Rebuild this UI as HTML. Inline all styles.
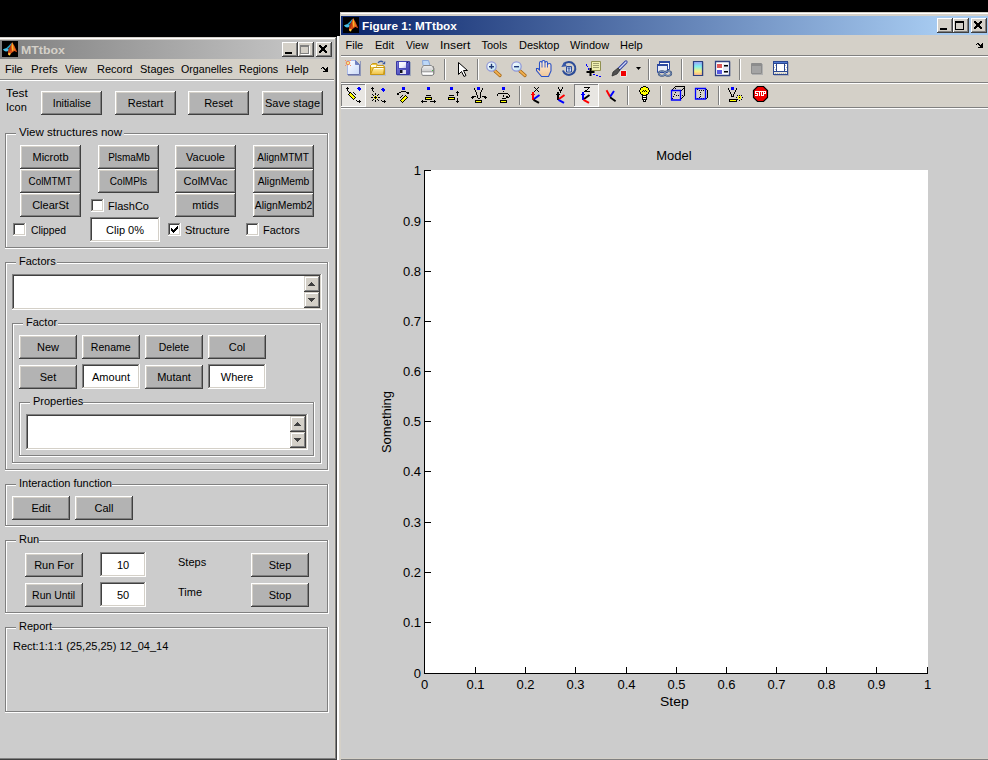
<!DOCTYPE html><html><head><meta charset="utf-8"><style>
html,body{margin:0;padding:0;width:988px;height:760px;overflow:hidden;background:#000}
body>div,body>svg{position:absolute}
.t{font-family:"Liberation Sans",sans-serif;white-space:pre;color:#000}
</style></head><body>
<div style="left:0px;top:0px;width:988px;height:760px;background:#000;"></div>
<div style="left:0px;top:37px;width:337px;height:723px;background:#404040;"></div>
<div style="left:0px;top:37px;width:336px;height:722px;background:#D4D0C8;"></div>
<div style="left:0px;top:38px;width:336px;height:721px;background:#808080;"></div>
<div style="left:0px;top:38px;width:335px;height:720px;background:#FFFFFF;"></div>
<div style="left:0px;top:39px;width:335px;height:719px;background:#D4D0C8;"></div>
<div style="left:0px;top:40px;width:334px;height:19px;background:linear-gradient(to right,#808080,#C0C0C0 84%);"></div>
<svg style="left:2px;top:41px" width="16" height="16" viewBox="0 0 16 16"><rect width="16" height="16" fill="#000"/><path d="M4.5 6.8L7 4.5 9.5 1.8 9.9 3 8 6 6 7.8Z" fill="#2A9CC0"/><path d="M0.8 8.5L3 7.5 5 7 6.6 8 6.6 10 4 10.6 2.5 9.9Z" fill="#48C0E8"/><path d="M10.1 0.9L12.5 5 15.2 11.3 12.3 10 9.5 12 7.5 14.3 6 13.5 6 10.5 7 8 9 4Z" fill="#D85018"/><path d="M10.1 1.5L11.4 5 11.6 9 10.3 10.6 9.7 6Z" fill="#F8B828"/><path d="M11.6 5L13 8.5 12.3 10 11.6 9Z" fill="#F07820"/><path d="M6.3 12L8.6 12.3 8 14.4 6.5 14Z" fill="#FFD838"/><path d="M6 10.5L7 8 9 4 8.6 9 7 12Z" fill="#A83010"/></svg>
<div class="t" style="left:21px;top:40px;height:20px;line-height:20px;font-size:11px;color:#D4D0C8;font-weight:bold;transform:scaleX(1.12);transform-origin:0 0;">MTtbox</div>
<div style="left:282px;top:42px;width:16px;height:15px;background:#404040;"></div>
<div style="left:282px;top:42px;width:15px;height:14px;background:#FFFFFF;"></div>
<div style="left:283px;top:43px;width:14px;height:13px;background:#808080;"></div>
<div style="left:283px;top:43px;width:13px;height:12px;background:#D4D0C8;"></div>
<div style="left:284px;top:44px;width:12px;height:11px;background:#D4D0C8;"></div>
<div style="left:285px;top:52px;width:7px;height:2px;background:#000;"></div>
<div style="left:298px;top:42px;width:16px;height:15px;background:#404040;"></div>
<div style="left:298px;top:42px;width:15px;height:14px;background:#FFFFFF;"></div>
<div style="left:299px;top:43px;width:14px;height:13px;background:#808080;"></div>
<div style="left:299px;top:43px;width:13px;height:12px;background:#D4D0C8;"></div>
<div style="left:300px;top:44px;width:12px;height:11px;background:#D4D0C8;"></div>
<div style="left:301px;top:46px;width:9px;height:9px;background:#FFFFFF;"></div>
<div style="left:300px;top:45px;width:9px;height:9px;background:#808080;"></div>
<div style="left:301px;top:47px;width:7px;height:6px;background:#D4D0C8;"></div>
<div style="left:316px;top:42px;width:16px;height:15px;background:#404040;"></div>
<div style="left:316px;top:42px;width:15px;height:14px;background:#FFFFFF;"></div>
<div style="left:317px;top:43px;width:14px;height:13px;background:#808080;"></div>
<div style="left:317px;top:43px;width:13px;height:12px;background:#D4D0C8;"></div>
<div style="left:318px;top:44px;width:12px;height:11px;background:#D4D0C8;"></div>
<svg style="left:316px;top:42px" width="16" height="15" viewBox="0 0 16 15"><path d="M3 3h1v1h-1zM4 3h1v1h-1zM9 3h1v1h-1zM10 3h1v1h-1zM3 4h1v1h-1zM4 4h1v1h-1zM5 4h1v1h-1zM8 4h1v1h-1zM9 4h1v1h-1zM10 4h1v1h-1zM4 5h1v1h-1zM5 5h1v1h-1zM6 5h1v1h-1zM7 5h1v1h-1zM8 5h1v1h-1zM9 5h1v1h-1zM5 6h1v1h-1zM6 6h1v1h-1zM7 6h1v1h-1zM8 6h1v1h-1zM5 7h1v1h-1zM6 7h1v1h-1zM7 7h1v1h-1zM8 7h1v1h-1zM4 8h1v1h-1zM5 8h1v1h-1zM6 8h1v1h-1zM7 8h1v1h-1zM8 8h1v1h-1zM9 8h1v1h-1zM3 9h1v1h-1zM4 9h1v1h-1zM5 9h1v1h-1zM8 9h1v1h-1zM9 9h1v1h-1zM10 9h1v1h-1zM3 10h1v1h-1zM4 10h1v1h-1zM9 10h1v1h-1zM10 10h1v1h-1z" fill="#000" shape-rendering="crispEdges"/></svg>
<div style="left:0px;top:59px;width:334px;height:20px;background:#D4D0C8;"></div>
<div class="t" style="left:5px;top:59px;height:20px;line-height:20px;font-size:11px;color:#000;">File</div>
<div class="t" style="left:31px;top:59px;height:20px;line-height:20px;font-size:11px;color:#000;transform:scaleX(1.04);transform-origin:0 0;">Prefs</div>
<div class="t" style="left:65px;top:59px;height:20px;line-height:20px;font-size:11px;color:#000;transform:scaleX(0.93);transform-origin:0 0;">View</div>
<div class="t" style="left:97px;top:59px;height:20px;line-height:20px;font-size:11px;color:#000;">Record</div>
<div class="t" style="left:140px;top:59px;height:20px;line-height:20px;font-size:11px;color:#000;">Stages</div>
<div class="t" style="left:181px;top:59px;height:20px;line-height:20px;font-size:11px;color:#000;transform:scaleX(0.97);transform-origin:0 0;">Organelles</div>
<div class="t" style="left:239px;top:59px;height:20px;line-height:20px;font-size:11px;color:#000;transform:scaleX(0.97);transform-origin:0 0;">Regions</div>
<div class="t" style="left:286px;top:59px;height:20px;line-height:20px;font-size:11px;color:#000;">Help</div>
<div style="left:0px;top:79px;width:334px;height:1px;background:#808080;"></div>
<div style="left:0px;top:80px;width:334px;height:1px;background:#FFFFFF;"></div>
<div style="left:0px;top:81px;width:334px;height:677px;background:#CCCCCC;"></div>
<div class="t" style="left:6px;top:83px;height:20px;line-height:20px;font-size:11px;color:#000;transform:scaleX(1.08);transform-origin:0 0;">Test</div>
<div class="t" style="left:6px;top:97px;height:20px;line-height:20px;font-size:11px;color:#000;">Icon</div>
<div style="left:41px;top:91px;width:61px;height:24px;background:#404040;"></div>
<div style="left:41px;top:91px;width:60px;height:23px;background:#FFFFFF;"></div>
<div style="left:42px;top:92px;width:59px;height:22px;background:#808080;"></div>
<div style="left:42px;top:92px;width:58px;height:21px;background:#D4D0C8;"></div>
<div style="left:43px;top:93px;width:57px;height:20px;background:#B3B3B3;"></div>
<div class="t" style="left:-78.5px;top:93px;width:300px;height:20px;line-height:20px;font-size:11px;color:#000;text-align:center;"><span style="display:inline-block;transform:scaleX(0.963)">Initialise</span></div>
<div style="left:115px;top:91px;width:61px;height:24px;background:#404040;"></div>
<div style="left:115px;top:91px;width:60px;height:23px;background:#FFFFFF;"></div>
<div style="left:116px;top:92px;width:59px;height:22px;background:#808080;"></div>
<div style="left:116px;top:92px;width:58px;height:21px;background:#D4D0C8;"></div>
<div style="left:117px;top:93px;width:57px;height:20px;background:#B3B3B3;"></div>
<div class="t" style="left:-4.5px;top:93px;width:300px;height:20px;line-height:20px;font-size:11px;color:#000;text-align:center;">Restart</div>
<div style="left:188px;top:91px;width:61px;height:24px;background:#404040;"></div>
<div style="left:188px;top:91px;width:60px;height:23px;background:#FFFFFF;"></div>
<div style="left:189px;top:92px;width:59px;height:22px;background:#808080;"></div>
<div style="left:189px;top:92px;width:58px;height:21px;background:#D4D0C8;"></div>
<div style="left:190px;top:93px;width:57px;height:20px;background:#B3B3B3;"></div>
<div class="t" style="left:68.5px;top:93px;width:300px;height:20px;line-height:20px;font-size:11px;color:#000;text-align:center;">Reset</div>
<div style="left:262px;top:91px;width:61px;height:24px;background:#404040;"></div>
<div style="left:262px;top:91px;width:60px;height:23px;background:#FFFFFF;"></div>
<div style="left:263px;top:92px;width:59px;height:22px;background:#808080;"></div>
<div style="left:263px;top:92px;width:58px;height:21px;background:#D4D0C8;"></div>
<div style="left:264px;top:93px;width:57px;height:20px;background:#B3B3B3;"></div>
<div class="t" style="left:142.5px;top:93px;width:300px;height:20px;line-height:20px;font-size:11px;color:#000;text-align:center;">Save stage</div>
<div style="left:5px;top:133px;width:323px;height:1px;background:#808080;"></div>
<div style="left:5px;top:133px;width:1px;height:115px;background:#808080;"></div>
<div style="left:6px;top:134px;width:321px;height:1px;background:#FFFFFF;"></div>
<div style="left:6px;top:134px;width:1px;height:113px;background:#FFFFFF;"></div>
<div style="left:327px;top:133px;width:1px;height:115px;background:#808080;"></div>
<div style="left:5px;top:247px;width:323px;height:1px;background:#808080;"></div>
<div style="left:328px;top:133px;width:1px;height:116px;background:#FFFFFF;"></div>
<div style="left:5px;top:248px;width:324px;height:1px;background:#FFFFFF;"></div>
<div style="left:16px;top:126px;width:108px;height:9px;background:#CCCCCC;"></div>
<div class="t" style="left:19px;top:122px;height:20px;line-height:20px;font-size:11px;color:#000;transform:scaleX(1.05);transform-origin:0 0;">View structures now</div>
<div style="left:20px;top:145px;width:61px;height:24px;background:#404040;"></div>
<div style="left:20px;top:145px;width:60px;height:23px;background:#FFFFFF;"></div>
<div style="left:21px;top:146px;width:59px;height:22px;background:#808080;"></div>
<div style="left:21px;top:146px;width:58px;height:21px;background:#D4D0C8;"></div>
<div style="left:22px;top:147px;width:57px;height:20px;background:#B3B3B3;"></div>
<div class="t" style="left:-99.5px;top:147px;width:300px;height:20px;line-height:20px;font-size:11px;color:#000;text-align:center;">Microtb</div>
<div style="left:98px;top:145px;width:61px;height:24px;background:#404040;"></div>
<div style="left:98px;top:145px;width:60px;height:23px;background:#FFFFFF;"></div>
<div style="left:99px;top:146px;width:59px;height:22px;background:#808080;"></div>
<div style="left:99px;top:146px;width:58px;height:21px;background:#D4D0C8;"></div>
<div style="left:100px;top:147px;width:57px;height:20px;background:#B3B3B3;"></div>
<div class="t" style="left:-21.5px;top:147px;width:300px;height:20px;line-height:20px;font-size:11px;color:#000;text-align:center;"><span style="display:inline-block;transform:scaleX(0.907)">PlsmaMb</span></div>
<div style="left:175px;top:145px;width:61px;height:24px;background:#404040;"></div>
<div style="left:175px;top:145px;width:60px;height:23px;background:#FFFFFF;"></div>
<div style="left:176px;top:146px;width:59px;height:22px;background:#808080;"></div>
<div style="left:176px;top:146px;width:58px;height:21px;background:#D4D0C8;"></div>
<div style="left:177px;top:147px;width:57px;height:20px;background:#B3B3B3;"></div>
<div class="t" style="left:55.5px;top:147px;width:300px;height:20px;line-height:20px;font-size:11px;color:#000;text-align:center;">Vacuole</div>
<div style="left:253px;top:145px;width:61px;height:24px;background:#404040;"></div>
<div style="left:253px;top:145px;width:60px;height:23px;background:#FFFFFF;"></div>
<div style="left:254px;top:146px;width:59px;height:22px;background:#808080;"></div>
<div style="left:254px;top:146px;width:58px;height:21px;background:#D4D0C8;"></div>
<div style="left:255px;top:147px;width:57px;height:20px;background:#B3B3B3;"></div>
<div class="t" style="left:133.5px;top:147px;width:300px;height:20px;line-height:20px;font-size:11px;color:#000;text-align:center;"><span style="display:inline-block;transform:scaleX(0.92)">AlignMTMT</span></div>
<div style="left:20px;top:169px;width:61px;height:24px;background:#404040;"></div>
<div style="left:20px;top:169px;width:60px;height:23px;background:#FFFFFF;"></div>
<div style="left:21px;top:170px;width:59px;height:22px;background:#808080;"></div>
<div style="left:21px;top:170px;width:58px;height:21px;background:#D4D0C8;"></div>
<div style="left:22px;top:171px;width:57px;height:20px;background:#B3B3B3;"></div>
<div class="t" style="left:-99.5px;top:171px;width:300px;height:20px;line-height:20px;font-size:11px;color:#000;text-align:center;"><span style="display:inline-block;transform:scaleX(0.894)">ColMTMT</span></div>
<div style="left:98px;top:169px;width:61px;height:24px;background:#404040;"></div>
<div style="left:98px;top:169px;width:60px;height:23px;background:#FFFFFF;"></div>
<div style="left:99px;top:170px;width:59px;height:22px;background:#808080;"></div>
<div style="left:99px;top:170px;width:58px;height:21px;background:#D4D0C8;"></div>
<div style="left:100px;top:171px;width:57px;height:20px;background:#B3B3B3;"></div>
<div class="t" style="left:-21.5px;top:171px;width:300px;height:20px;line-height:20px;font-size:11px;color:#000;text-align:center;"><span style="display:inline-block;transform:scaleX(0.91)">ColMPls</span></div>
<div style="left:175px;top:169px;width:61px;height:24px;background:#404040;"></div>
<div style="left:175px;top:169px;width:60px;height:23px;background:#FFFFFF;"></div>
<div style="left:176px;top:170px;width:59px;height:22px;background:#808080;"></div>
<div style="left:176px;top:170px;width:58px;height:21px;background:#D4D0C8;"></div>
<div style="left:177px;top:171px;width:57px;height:20px;background:#B3B3B3;"></div>
<div class="t" style="left:55.5px;top:171px;width:300px;height:20px;line-height:20px;font-size:11px;color:#000;text-align:center;">ColMVac</div>
<div style="left:253px;top:169px;width:61px;height:24px;background:#404040;"></div>
<div style="left:253px;top:169px;width:60px;height:23px;background:#FFFFFF;"></div>
<div style="left:254px;top:170px;width:59px;height:22px;background:#808080;"></div>
<div style="left:254px;top:170px;width:58px;height:21px;background:#D4D0C8;"></div>
<div style="left:255px;top:171px;width:57px;height:20px;background:#B3B3B3;"></div>
<div class="t" style="left:133.5px;top:171px;width:300px;height:20px;line-height:20px;font-size:11px;color:#000;text-align:center;"><span style="display:inline-block;transform:scaleX(0.94)">AlignMemb</span></div>
<div style="left:20px;top:193px;width:61px;height:24px;background:#404040;"></div>
<div style="left:20px;top:193px;width:60px;height:23px;background:#FFFFFF;"></div>
<div style="left:21px;top:194px;width:59px;height:22px;background:#808080;"></div>
<div style="left:21px;top:194px;width:58px;height:21px;background:#D4D0C8;"></div>
<div style="left:22px;top:195px;width:57px;height:20px;background:#B3B3B3;"></div>
<div class="t" style="left:-99.5px;top:195px;width:300px;height:20px;line-height:20px;font-size:11px;color:#000;text-align:center;">ClearSt</div>
<div style="left:175px;top:193px;width:61px;height:24px;background:#404040;"></div>
<div style="left:175px;top:193px;width:60px;height:23px;background:#FFFFFF;"></div>
<div style="left:176px;top:194px;width:59px;height:22px;background:#808080;"></div>
<div style="left:176px;top:194px;width:58px;height:21px;background:#D4D0C8;"></div>
<div style="left:177px;top:195px;width:57px;height:20px;background:#B3B3B3;"></div>
<div class="t" style="left:55.5px;top:195px;width:300px;height:20px;line-height:20px;font-size:11px;color:#000;text-align:center;">mtids</div>
<div style="left:253px;top:193px;width:61px;height:24px;background:#404040;"></div>
<div style="left:253px;top:193px;width:60px;height:23px;background:#FFFFFF;"></div>
<div style="left:254px;top:194px;width:59px;height:22px;background:#808080;"></div>
<div style="left:254px;top:194px;width:58px;height:21px;background:#D4D0C8;"></div>
<div style="left:255px;top:195px;width:57px;height:20px;background:#B3B3B3;"></div>
<div class="t" style="left:133.5px;top:195px;width:300px;height:20px;line-height:20px;font-size:11px;color:#000;text-align:center;"><span style="display:inline-block;transform:scaleX(0.94)">AlignMemb2</span></div>
<div style="left:91px;top:199px;width:13px;height:13px;background:#FFFFFF;"></div>
<div style="left:91px;top:199px;width:12px;height:12px;background:#808080;"></div>
<div style="left:92px;top:200px;width:11px;height:11px;background:#D4D0C8;"></div>
<div style="left:92px;top:200px;width:10px;height:10px;background:#404040;"></div>
<div style="left:93px;top:201px;width:9px;height:9px;background:#FFFFFF;"></div>
<div class="t" style="left:108px;top:196px;height:20px;line-height:20px;font-size:11px;color:#000;">FlashCo</div>
<div style="left:13px;top:223px;width:13px;height:13px;background:#FFFFFF;"></div>
<div style="left:13px;top:223px;width:12px;height:12px;background:#808080;"></div>
<div style="left:14px;top:224px;width:11px;height:11px;background:#D4D0C8;"></div>
<div style="left:14px;top:224px;width:10px;height:10px;background:#404040;"></div>
<div style="left:15px;top:225px;width:9px;height:9px;background:#FFFFFF;"></div>
<div class="t" style="left:31px;top:220px;height:20px;line-height:20px;font-size:11px;color:#000;transform:scaleX(0.94);transform-origin:0 0;">Clipped</div>
<div style="left:90px;top:217px;width:70px;height:25px;background:#FFFFFF;"></div>
<div style="left:90px;top:217px;width:69px;height:24px;background:#808080;"></div>
<div style="left:91px;top:218px;width:68px;height:23px;background:#D4D0C8;"></div>
<div style="left:91px;top:218px;width:67px;height:22px;background:#404040;"></div>
<div style="left:92px;top:219px;width:66px;height:21px;background:#FFFFFF;"></div>
<div class="t" style="left:-25.0px;top:220px;width:300px;height:20px;line-height:20px;font-size:11px;color:#000;text-align:center;">Clip 0%</div>
<div style="left:168px;top:223px;width:13px;height:13px;background:#FFFFFF;"></div>
<div style="left:168px;top:223px;width:12px;height:12px;background:#808080;"></div>
<div style="left:169px;top:224px;width:11px;height:11px;background:#D4D0C8;"></div>
<div style="left:169px;top:224px;width:10px;height:10px;background:#404040;"></div>
<div style="left:170px;top:225px;width:9px;height:9px;background:#FFFFFF;"></div>
<svg style="left:168px;top:223px" width="13" height="13" shape-rendering="crispEdges"><path d="M3 5h1v3h-1zM4 6h1v3h-1zM5 7h1v3h-1zM6 6h1v3h-1zM7 5h1v3h-1zM8 4h1v3h-1zM9 3h1v3h-1z" fill="#000"/></svg>
<div class="t" style="left:185px;top:220px;height:20px;line-height:20px;font-size:11px;color:#000;">Structure</div>
<div style="left:246px;top:223px;width:13px;height:13px;background:#FFFFFF;"></div>
<div style="left:246px;top:223px;width:12px;height:12px;background:#808080;"></div>
<div style="left:247px;top:224px;width:11px;height:11px;background:#D4D0C8;"></div>
<div style="left:247px;top:224px;width:10px;height:10px;background:#404040;"></div>
<div style="left:248px;top:225px;width:9px;height:9px;background:#FFFFFF;"></div>
<div class="t" style="left:263px;top:220px;height:20px;line-height:20px;font-size:11px;color:#000;">Factors</div>
<div style="left:5px;top:262px;width:323px;height:1px;background:#808080;"></div>
<div style="left:5px;top:262px;width:1px;height:208px;background:#808080;"></div>
<div style="left:6px;top:263px;width:321px;height:1px;background:#FFFFFF;"></div>
<div style="left:6px;top:263px;width:1px;height:206px;background:#FFFFFF;"></div>
<div style="left:327px;top:262px;width:1px;height:208px;background:#808080;"></div>
<div style="left:5px;top:469px;width:323px;height:1px;background:#808080;"></div>
<div style="left:328px;top:262px;width:1px;height:209px;background:#FFFFFF;"></div>
<div style="left:5px;top:470px;width:324px;height:1px;background:#FFFFFF;"></div>
<div style="left:16px;top:255px;width:41px;height:9px;background:#CCCCCC;"></div>
<div class="t" style="left:19px;top:251px;height:20px;line-height:20px;font-size:11px;color:#000;">Factors</div>
<div style="left:12px;top:274px;width:310px;height:36px;background:#FFFFFF;"></div>
<div style="left:12px;top:274px;width:309px;height:35px;background:#808080;"></div>
<div style="left:13px;top:275px;width:308px;height:34px;background:#D4D0C8;"></div>
<div style="left:13px;top:275px;width:307px;height:33px;background:#404040;"></div>
<div style="left:14px;top:276px;width:306px;height:32px;background:#FFFFFF;"></div>
<div style="left:304px;top:276px;width:16px;height:16px;background:#404040;"></div>
<div style="left:304px;top:276px;width:15px;height:15px;background:#D4D0C8;"></div>
<div style="left:305px;top:277px;width:14px;height:14px;background:#808080;"></div>
<div style="left:305px;top:277px;width:13px;height:13px;background:#FFFFFF;"></div>
<div style="left:306px;top:278px;width:12px;height:12px;background:#D4D0C8;"></div>
<svg style="left:304px;top:276px" width="16" height="16" viewBox="0 0 16 16"><path d="M7 6h1v1h-1zM6 7h3v1h-3zM5 8h5v1h-5zM4 9h7v1h-7z" fill="#404040" shape-rendering="crispEdges"/></svg>
<div style="left:304px;top:292px;width:16px;height:16px;background:#404040;"></div>
<div style="left:304px;top:292px;width:15px;height:15px;background:#D4D0C8;"></div>
<div style="left:305px;top:293px;width:14px;height:14px;background:#808080;"></div>
<div style="left:305px;top:293px;width:13px;height:13px;background:#FFFFFF;"></div>
<div style="left:306px;top:294px;width:12px;height:12px;background:#D4D0C8;"></div>
<svg style="left:304px;top:292px" width="16" height="16" viewBox="0 0 16 16"><path d="M4 6h7v1h-7zM5 7h5v1h-5zM6 8h3v1h-3zM7 9h1v1h-1z" fill="#404040" shape-rendering="crispEdges"/></svg>
<div style="left:12px;top:323px;width:309px;height:1px;background:#808080;"></div>
<div style="left:12px;top:323px;width:1px;height:140px;background:#808080;"></div>
<div style="left:13px;top:324px;width:307px;height:1px;background:#FFFFFF;"></div>
<div style="left:13px;top:324px;width:1px;height:138px;background:#FFFFFF;"></div>
<div style="left:320px;top:323px;width:1px;height:140px;background:#808080;"></div>
<div style="left:12px;top:462px;width:309px;height:1px;background:#808080;"></div>
<div style="left:321px;top:323px;width:1px;height:141px;background:#FFFFFF;"></div>
<div style="left:12px;top:463px;width:310px;height:1px;background:#FFFFFF;"></div>
<div style="left:23px;top:316px;width:35px;height:9px;background:#CCCCCC;"></div>
<div class="t" style="left:26px;top:312px;height:20px;line-height:20px;font-size:11px;color:#000;">Factor</div>
<div style="left:19px;top:335px;width:58px;height:24px;background:#404040;"></div>
<div style="left:19px;top:335px;width:57px;height:23px;background:#FFFFFF;"></div>
<div style="left:20px;top:336px;width:56px;height:22px;background:#808080;"></div>
<div style="left:20px;top:336px;width:55px;height:21px;background:#D4D0C8;"></div>
<div style="left:21px;top:337px;width:54px;height:20px;background:#B3B3B3;"></div>
<div class="t" style="left:-102.0px;top:337px;width:300px;height:20px;line-height:20px;font-size:11px;color:#000;text-align:center;">New</div>
<div style="left:82px;top:335px;width:58px;height:24px;background:#404040;"></div>
<div style="left:82px;top:335px;width:57px;height:23px;background:#FFFFFF;"></div>
<div style="left:83px;top:336px;width:56px;height:22px;background:#808080;"></div>
<div style="left:83px;top:336px;width:55px;height:21px;background:#D4D0C8;"></div>
<div style="left:84px;top:337px;width:54px;height:20px;background:#B3B3B3;"></div>
<div class="t" style="left:-39.0px;top:337px;width:300px;height:20px;line-height:20px;font-size:11px;color:#000;text-align:center;"><span style="display:inline-block;transform:scaleX(0.958)">Rename</span></div>
<div style="left:145px;top:335px;width:58px;height:24px;background:#404040;"></div>
<div style="left:145px;top:335px;width:57px;height:23px;background:#FFFFFF;"></div>
<div style="left:146px;top:336px;width:56px;height:22px;background:#808080;"></div>
<div style="left:146px;top:336px;width:55px;height:21px;background:#D4D0C8;"></div>
<div style="left:147px;top:337px;width:54px;height:20px;background:#B3B3B3;"></div>
<div class="t" style="left:24.0px;top:337px;width:300px;height:20px;line-height:20px;font-size:11px;color:#000;text-align:center;"><span style="display:inline-block;transform:scaleX(0.948)">Delete</span></div>
<div style="left:208px;top:335px;width:58px;height:24px;background:#404040;"></div>
<div style="left:208px;top:335px;width:57px;height:23px;background:#FFFFFF;"></div>
<div style="left:209px;top:336px;width:56px;height:22px;background:#808080;"></div>
<div style="left:209px;top:336px;width:55px;height:21px;background:#D4D0C8;"></div>
<div style="left:210px;top:337px;width:54px;height:20px;background:#B3B3B3;"></div>
<div class="t" style="left:87.0px;top:337px;width:300px;height:20px;line-height:20px;font-size:11px;color:#000;text-align:center;">Col</div>
<div style="left:19px;top:365px;width:58px;height:24px;background:#404040;"></div>
<div style="left:19px;top:365px;width:57px;height:23px;background:#FFFFFF;"></div>
<div style="left:20px;top:366px;width:56px;height:22px;background:#808080;"></div>
<div style="left:20px;top:366px;width:55px;height:21px;background:#D4D0C8;"></div>
<div style="left:21px;top:367px;width:54px;height:20px;background:#B3B3B3;"></div>
<div class="t" style="left:-102.0px;top:367px;width:300px;height:20px;line-height:20px;font-size:11px;color:#000;text-align:center;">Set</div>
<div style="left:82px;top:364px;width:58px;height:25px;background:#FFFFFF;"></div>
<div style="left:82px;top:364px;width:57px;height:24px;background:#808080;"></div>
<div style="left:83px;top:365px;width:56px;height:23px;background:#D4D0C8;"></div>
<div style="left:83px;top:365px;width:55px;height:22px;background:#404040;"></div>
<div style="left:84px;top:366px;width:54px;height:21px;background:#FFFFFF;"></div>
<div class="t" style="left:-39.0px;top:367px;width:300px;height:20px;line-height:20px;font-size:11px;color:#000;text-align:center;">Amount</div>
<div style="left:145px;top:365px;width:58px;height:24px;background:#404040;"></div>
<div style="left:145px;top:365px;width:57px;height:23px;background:#FFFFFF;"></div>
<div style="left:146px;top:366px;width:56px;height:22px;background:#808080;"></div>
<div style="left:146px;top:366px;width:55px;height:21px;background:#D4D0C8;"></div>
<div style="left:147px;top:367px;width:54px;height:20px;background:#B3B3B3;"></div>
<div class="t" style="left:24.0px;top:367px;width:300px;height:20px;line-height:20px;font-size:11px;color:#000;text-align:center;">Mutant</div>
<div style="left:208px;top:364px;width:58px;height:25px;background:#FFFFFF;"></div>
<div style="left:208px;top:364px;width:57px;height:24px;background:#808080;"></div>
<div style="left:209px;top:365px;width:56px;height:23px;background:#D4D0C8;"></div>
<div style="left:209px;top:365px;width:55px;height:22px;background:#404040;"></div>
<div style="left:210px;top:366px;width:54px;height:21px;background:#FFFFFF;"></div>
<div class="t" style="left:87.0px;top:367px;width:300px;height:20px;line-height:20px;font-size:11px;color:#000;text-align:center;">Where</div>
<div style="left:19px;top:402px;width:295px;height:1px;background:#808080;"></div>
<div style="left:19px;top:402px;width:1px;height:54px;background:#808080;"></div>
<div style="left:20px;top:403px;width:293px;height:1px;background:#FFFFFF;"></div>
<div style="left:20px;top:403px;width:1px;height:52px;background:#FFFFFF;"></div>
<div style="left:313px;top:402px;width:1px;height:54px;background:#808080;"></div>
<div style="left:19px;top:455px;width:295px;height:1px;background:#808080;"></div>
<div style="left:314px;top:402px;width:1px;height:55px;background:#FFFFFF;"></div>
<div style="left:19px;top:456px;width:296px;height:1px;background:#FFFFFF;"></div>
<div style="left:30px;top:395px;width:53px;height:9px;background:#CCCCCC;"></div>
<div class="t" style="left:33px;top:391px;height:20px;line-height:20px;font-size:11px;color:#000;">Properties</div>
<div style="left:26px;top:414px;width:282px;height:36px;background:#FFFFFF;"></div>
<div style="left:26px;top:414px;width:281px;height:35px;background:#808080;"></div>
<div style="left:27px;top:415px;width:280px;height:34px;background:#D4D0C8;"></div>
<div style="left:27px;top:415px;width:279px;height:33px;background:#404040;"></div>
<div style="left:28px;top:416px;width:278px;height:32px;background:#FFFFFF;"></div>
<div style="left:290px;top:416px;width:16px;height:16px;background:#404040;"></div>
<div style="left:290px;top:416px;width:15px;height:15px;background:#D4D0C8;"></div>
<div style="left:291px;top:417px;width:14px;height:14px;background:#808080;"></div>
<div style="left:291px;top:417px;width:13px;height:13px;background:#FFFFFF;"></div>
<div style="left:292px;top:418px;width:12px;height:12px;background:#D4D0C8;"></div>
<svg style="left:290px;top:416px" width="16" height="16" viewBox="0 0 16 16"><path d="M7 6h1v1h-1zM6 7h3v1h-3zM5 8h5v1h-5zM4 9h7v1h-7z" fill="#404040" shape-rendering="crispEdges"/></svg>
<div style="left:290px;top:432px;width:16px;height:16px;background:#404040;"></div>
<div style="left:290px;top:432px;width:15px;height:15px;background:#D4D0C8;"></div>
<div style="left:291px;top:433px;width:14px;height:14px;background:#808080;"></div>
<div style="left:291px;top:433px;width:13px;height:13px;background:#FFFFFF;"></div>
<div style="left:292px;top:434px;width:12px;height:12px;background:#D4D0C8;"></div>
<svg style="left:290px;top:432px" width="16" height="16" viewBox="0 0 16 16"><path d="M4 6h7v1h-7zM5 7h5v1h-5zM6 8h3v1h-3zM7 9h1v1h-1z" fill="#404040" shape-rendering="crispEdges"/></svg>
<div style="left:5px;top:484px;width:323px;height:1px;background:#808080;"></div>
<div style="left:5px;top:484px;width:1px;height:42px;background:#808080;"></div>
<div style="left:6px;top:485px;width:321px;height:1px;background:#FFFFFF;"></div>
<div style="left:6px;top:485px;width:1px;height:40px;background:#FFFFFF;"></div>
<div style="left:327px;top:484px;width:1px;height:42px;background:#808080;"></div>
<div style="left:5px;top:525px;width:323px;height:1px;background:#808080;"></div>
<div style="left:328px;top:484px;width:1px;height:43px;background:#FFFFFF;"></div>
<div style="left:5px;top:526px;width:324px;height:1px;background:#FFFFFF;"></div>
<div style="left:16px;top:477px;width:96px;height:9px;background:#CCCCCC;"></div>
<div class="t" style="left:19px;top:473px;height:20px;line-height:20px;font-size:11px;color:#000;">Interaction function</div>
<div style="left:12px;top:496px;width:58px;height:24px;background:#404040;"></div>
<div style="left:12px;top:496px;width:57px;height:23px;background:#FFFFFF;"></div>
<div style="left:13px;top:497px;width:56px;height:22px;background:#808080;"></div>
<div style="left:13px;top:497px;width:55px;height:21px;background:#D4D0C8;"></div>
<div style="left:14px;top:498px;width:54px;height:20px;background:#B3B3B3;"></div>
<div class="t" style="left:-109.0px;top:498px;width:300px;height:20px;line-height:20px;font-size:11px;color:#000;text-align:center;">Edit</div>
<div style="left:75px;top:496px;width:58px;height:24px;background:#404040;"></div>
<div style="left:75px;top:496px;width:57px;height:23px;background:#FFFFFF;"></div>
<div style="left:76px;top:497px;width:56px;height:22px;background:#808080;"></div>
<div style="left:76px;top:497px;width:55px;height:21px;background:#D4D0C8;"></div>
<div style="left:77px;top:498px;width:54px;height:20px;background:#B3B3B3;"></div>
<div class="t" style="left:-46.0px;top:498px;width:300px;height:20px;line-height:20px;font-size:11px;color:#000;text-align:center;">Call</div>
<div style="left:5px;top:540px;width:323px;height:1px;background:#808080;"></div>
<div style="left:5px;top:540px;width:1px;height:73px;background:#808080;"></div>
<div style="left:6px;top:541px;width:321px;height:1px;background:#FFFFFF;"></div>
<div style="left:6px;top:541px;width:1px;height:71px;background:#FFFFFF;"></div>
<div style="left:327px;top:540px;width:1px;height:73px;background:#808080;"></div>
<div style="left:5px;top:612px;width:323px;height:1px;background:#808080;"></div>
<div style="left:328px;top:540px;width:1px;height:74px;background:#FFFFFF;"></div>
<div style="left:5px;top:613px;width:324px;height:1px;background:#FFFFFF;"></div>
<div style="left:16px;top:533px;width:23px;height:9px;background:#CCCCCC;"></div>
<div class="t" style="left:19px;top:529px;height:20px;line-height:20px;font-size:11px;color:#000;">Run</div>
<div style="left:25px;top:553px;width:58px;height:24px;background:#404040;"></div>
<div style="left:25px;top:553px;width:57px;height:23px;background:#FFFFFF;"></div>
<div style="left:26px;top:554px;width:56px;height:22px;background:#808080;"></div>
<div style="left:26px;top:554px;width:55px;height:21px;background:#D4D0C8;"></div>
<div style="left:27px;top:555px;width:54px;height:20px;background:#B3B3B3;"></div>
<div class="t" style="left:-96.0px;top:555px;width:300px;height:20px;line-height:20px;font-size:11px;color:#000;text-align:center;">Run For</div>
<div style="left:100px;top:552px;width:46px;height:25px;background:#FFFFFF;"></div>
<div style="left:100px;top:552px;width:45px;height:24px;background:#808080;"></div>
<div style="left:101px;top:553px;width:44px;height:23px;background:#D4D0C8;"></div>
<div style="left:101px;top:553px;width:43px;height:22px;background:#404040;"></div>
<div style="left:102px;top:554px;width:42px;height:21px;background:#FFFFFF;"></div>
<div class="t" style="left:-27.0px;top:555px;width:300px;height:20px;line-height:20px;font-size:11px;color:#000;text-align:center;">10</div>
<div class="t" style="left:178px;top:552px;height:20px;line-height:20px;font-size:11px;color:#000;">Steps</div>
<div style="left:251px;top:553px;width:58px;height:24px;background:#404040;"></div>
<div style="left:251px;top:553px;width:57px;height:23px;background:#FFFFFF;"></div>
<div style="left:252px;top:554px;width:56px;height:22px;background:#808080;"></div>
<div style="left:252px;top:554px;width:55px;height:21px;background:#D4D0C8;"></div>
<div style="left:253px;top:555px;width:54px;height:20px;background:#B3B3B3;"></div>
<div class="t" style="left:130.0px;top:555px;width:300px;height:20px;line-height:20px;font-size:11px;color:#000;text-align:center;">Step</div>
<div style="left:25px;top:583px;width:58px;height:24px;background:#404040;"></div>
<div style="left:25px;top:583px;width:57px;height:23px;background:#FFFFFF;"></div>
<div style="left:26px;top:584px;width:56px;height:22px;background:#808080;"></div>
<div style="left:26px;top:584px;width:55px;height:21px;background:#D4D0C8;"></div>
<div style="left:27px;top:585px;width:54px;height:20px;background:#B3B3B3;"></div>
<div class="t" style="left:-96.0px;top:585px;width:300px;height:20px;line-height:20px;font-size:11px;color:#000;text-align:center;"><span style="display:inline-block;transform:scaleX(0.952)">Run Until</span></div>
<div style="left:100px;top:582px;width:46px;height:25px;background:#FFFFFF;"></div>
<div style="left:100px;top:582px;width:45px;height:24px;background:#808080;"></div>
<div style="left:101px;top:583px;width:44px;height:23px;background:#D4D0C8;"></div>
<div style="left:101px;top:583px;width:43px;height:22px;background:#404040;"></div>
<div style="left:102px;top:584px;width:42px;height:21px;background:#FFFFFF;"></div>
<div class="t" style="left:-27.0px;top:585px;width:300px;height:20px;line-height:20px;font-size:11px;color:#000;text-align:center;">50</div>
<div class="t" style="left:178px;top:582px;height:20px;line-height:20px;font-size:11px;color:#000;">Time</div>
<div style="left:251px;top:583px;width:58px;height:24px;background:#404040;"></div>
<div style="left:251px;top:583px;width:57px;height:23px;background:#FFFFFF;"></div>
<div style="left:252px;top:584px;width:56px;height:22px;background:#808080;"></div>
<div style="left:252px;top:584px;width:55px;height:21px;background:#D4D0C8;"></div>
<div style="left:253px;top:585px;width:54px;height:20px;background:#B3B3B3;"></div>
<div class="t" style="left:130.0px;top:585px;width:300px;height:20px;line-height:20px;font-size:11px;color:#000;text-align:center;">Stop</div>
<div style="left:5px;top:627px;width:323px;height:1px;background:#808080;"></div>
<div style="left:5px;top:627px;width:1px;height:85px;background:#808080;"></div>
<div style="left:6px;top:628px;width:321px;height:1px;background:#FFFFFF;"></div>
<div style="left:6px;top:628px;width:1px;height:83px;background:#FFFFFF;"></div>
<div style="left:327px;top:627px;width:1px;height:85px;background:#808080;"></div>
<div style="left:5px;top:711px;width:323px;height:1px;background:#808080;"></div>
<div style="left:328px;top:627px;width:1px;height:86px;background:#FFFFFF;"></div>
<div style="left:5px;top:712px;width:324px;height:1px;background:#FFFFFF;"></div>
<div style="left:16px;top:620px;width:36px;height:9px;background:#CCCCCC;"></div>
<div class="t" style="left:19px;top:616px;height:20px;line-height:20px;font-size:11px;color:#000;">Report</div>
<div class="t" style="left:13px;top:636px;height:20px;line-height:20px;font-size:11px;color:#000;">Rect:1:1:1 (25,25,25) 12_04_14</div>
<div style="left:340px;top:12px;width:649px;height:748px;background:#D4D0C8;"></div>
<div style="left:341px;top:13px;width:648px;height:747px;background:#FFFFFF;"></div>
<div style="left:341px;top:14px;width:648px;height:746px;background:#D4D0C8;"></div>
<div style="left:341px;top:16px;width:647px;height:19px;background:linear-gradient(to right,#0A246A,#A6CAF0 92%);"></div>
<svg style="left:343px;top:17px" width="16" height="16" viewBox="0 0 16 16"><rect width="16" height="16" fill="#000"/><path d="M4.5 6.8L7 4.5 9.5 1.8 9.9 3 8 6 6 7.8Z" fill="#2A9CC0"/><path d="M0.8 8.5L3 7.5 5 7 6.6 8 6.6 10 4 10.6 2.5 9.9Z" fill="#48C0E8"/><path d="M10.1 0.9L12.5 5 15.2 11.3 12.3 10 9.5 12 7.5 14.3 6 13.5 6 10.5 7 8 9 4Z" fill="#D85018"/><path d="M10.1 1.5L11.4 5 11.6 9 10.3 10.6 9.7 6Z" fill="#F8B828"/><path d="M11.6 5L13 8.5 12.3 10 11.6 9Z" fill="#F07820"/><path d="M6.3 12L8.6 12.3 8 14.4 6.5 14Z" fill="#FFD838"/><path d="M6 10.5L7 8 9 4 8.6 9 7 12Z" fill="#A83010"/></svg>
<div class="t" style="left:362px;top:16px;height:20px;line-height:20px;font-size:11px;color:#FFFFFF;font-weight:bold;transform:scaleX(1.07);transform-origin:0 0;">Figure 1: MTtbox</div>
<div style="left:937px;top:18px;width:16px;height:15px;background:#404040;"></div>
<div style="left:937px;top:18px;width:15px;height:14px;background:#FFFFFF;"></div>
<div style="left:938px;top:19px;width:14px;height:13px;background:#808080;"></div>
<div style="left:938px;top:19px;width:13px;height:12px;background:#D4D0C8;"></div>
<div style="left:939px;top:20px;width:12px;height:11px;background:#D4D0C8;"></div>
<div style="left:940px;top:28px;width:7px;height:2px;background:#000;"></div>
<div style="left:953px;top:18px;width:16px;height:15px;background:#404040;"></div>
<div style="left:953px;top:18px;width:15px;height:14px;background:#FFFFFF;"></div>
<div style="left:954px;top:19px;width:14px;height:13px;background:#808080;"></div>
<div style="left:954px;top:19px;width:13px;height:12px;background:#D4D0C8;"></div>
<div style="left:955px;top:20px;width:12px;height:11px;background:#D4D0C8;"></div>
<div style="left:955px;top:21px;width:9px;height:9px;background:#000;"></div>
<div style="left:956px;top:23px;width:7px;height:6px;background:#D4D0C8;"></div>
<div style="left:971px;top:18px;width:16px;height:15px;background:#404040;"></div>
<div style="left:971px;top:18px;width:15px;height:14px;background:#FFFFFF;"></div>
<div style="left:972px;top:19px;width:14px;height:13px;background:#808080;"></div>
<div style="left:972px;top:19px;width:13px;height:12px;background:#D4D0C8;"></div>
<div style="left:973px;top:20px;width:12px;height:11px;background:#D4D0C8;"></div>
<svg style="left:971px;top:18px" width="16" height="15" viewBox="0 0 16 15"><path d="M3 3h1v1h-1zM4 3h1v1h-1zM9 3h1v1h-1zM10 3h1v1h-1zM3 4h1v1h-1zM4 4h1v1h-1zM5 4h1v1h-1zM8 4h1v1h-1zM9 4h1v1h-1zM10 4h1v1h-1zM4 5h1v1h-1zM5 5h1v1h-1zM6 5h1v1h-1zM7 5h1v1h-1zM8 5h1v1h-1zM9 5h1v1h-1zM5 6h1v1h-1zM6 6h1v1h-1zM7 6h1v1h-1zM8 6h1v1h-1zM5 7h1v1h-1zM6 7h1v1h-1zM7 7h1v1h-1zM8 7h1v1h-1zM4 8h1v1h-1zM5 8h1v1h-1zM6 8h1v1h-1zM7 8h1v1h-1zM8 8h1v1h-1zM9 8h1v1h-1zM3 9h1v1h-1zM4 9h1v1h-1zM5 9h1v1h-1zM8 9h1v1h-1zM9 9h1v1h-1zM10 9h1v1h-1zM3 10h1v1h-1zM4 10h1v1h-1zM9 10h1v1h-1zM10 10h1v1h-1z" fill="#000" shape-rendering="crispEdges"/></svg>
<div style="left:337px;top:36px;width:2px;height:724px;background:#FFFFFF;"></div>
<div style="left:339px;top:36px;width:650px;height:724px;background:#D4D0C8;"></div>
<div style="left:341px;top:759px;width:648px;height:1px;background:#808080;"></div>
<div class="t" style="left:345.5px;top:35px;height:20px;line-height:20px;font-size:11px;color:#000;">File</div>
<div class="t" style="left:375px;top:35px;height:20px;line-height:20px;font-size:11px;color:#000;">Edit</div>
<div class="t" style="left:405.5px;top:35px;height:20px;line-height:20px;font-size:11px;color:#000;transform:scaleX(0.95);transform-origin:0 0;">View</div>
<div class="t" style="left:440px;top:35px;height:20px;line-height:20px;font-size:11px;color:#000;transform:scaleX(1.1);transform-origin:0 0;">Insert</div>
<div class="t" style="left:481.5px;top:35px;height:20px;line-height:20px;font-size:11px;color:#000;">Tools</div>
<div class="t" style="left:519px;top:35px;height:20px;line-height:20px;font-size:11px;color:#000;">Desktop</div>
<div class="t" style="left:570px;top:35px;height:20px;line-height:20px;font-size:11px;color:#000;">Window</div>
<div class="t" style="left:620px;top:35px;height:20px;line-height:20px;font-size:11px;color:#000;">Help</div>
<div style="left:341px;top:55px;width:648px;height:1px;background:#808080;"></div>
<div style="left:341px;top:56px;width:648px;height:1px;background:#FFFFFF;"></div>
<div style="left:341px;top:82px;width:648px;height:1px;background:#808080;"></div>
<div style="left:341px;top:83px;width:648px;height:1px;background:#FFFFFF;"></div>
<div style="left:341px;top:107px;width:648px;height:1px;background:#808080;"></div>
<div style="left:341px;top:108px;width:648px;height:1px;background:#FFFFFF;"></div>
<div style="left:341px;top:109px;width:648px;height:649px;background:#CCCCCC;"></div>
<div style="left:425px;top:170px;width:503px;height:503px;background:#FFFFFF;"></div>
<div style="left:424px;top:170px;width:1px;height:504px;background:#000;"></div>
<div style="left:424px;top:673px;width:504px;height:1px;background:#000;"></div>
<div style="left:425px;top:673px;width:6px;height:1px;background:#000;"></div>
<div style="left:424px;top:667px;width:1px;height:6px;background:#000;"></div>
<div class="t" style="left:321px;top:664px;width:100px;height:20px;line-height:20px;font-size:13px;text-align:right">0</div>
<div class="t" style="left:274.5px;top:675px;width:300px;height:20px;line-height:20px;font-size:13px;color:#000;text-align:center;">0</div>
<div style="left:425px;top:622px;width:6px;height:1px;background:#000;"></div>
<div style="left:475px;top:667px;width:1px;height:6px;background:#000;"></div>
<div class="t" style="left:321px;top:613px;width:100px;height:20px;line-height:20px;font-size:13px;text-align:right">0.1</div>
<div class="t" style="left:325.5px;top:675px;width:300px;height:20px;line-height:20px;font-size:13px;color:#000;text-align:center;">0.1</div>
<div style="left:425px;top:572px;width:6px;height:1px;background:#000;"></div>
<div style="left:525px;top:667px;width:1px;height:6px;background:#000;"></div>
<div class="t" style="left:321px;top:563px;width:100px;height:20px;line-height:20px;font-size:13px;text-align:right">0.2</div>
<div class="t" style="left:375.5px;top:675px;width:300px;height:20px;line-height:20px;font-size:13px;color:#000;text-align:center;">0.2</div>
<div style="left:425px;top:522px;width:6px;height:1px;background:#000;"></div>
<div style="left:575px;top:667px;width:1px;height:6px;background:#000;"></div>
<div class="t" style="left:321px;top:513px;width:100px;height:20px;line-height:20px;font-size:13px;text-align:right">0.3</div>
<div class="t" style="left:425.5px;top:675px;width:300px;height:20px;line-height:20px;font-size:13px;color:#000;text-align:center;">0.3</div>
<div style="left:425px;top:471px;width:6px;height:1px;background:#000;"></div>
<div style="left:626px;top:667px;width:1px;height:6px;background:#000;"></div>
<div class="t" style="left:321px;top:462px;width:100px;height:20px;line-height:20px;font-size:13px;text-align:right">0.4</div>
<div class="t" style="left:476.5px;top:675px;width:300px;height:20px;line-height:20px;font-size:13px;color:#000;text-align:center;">0.4</div>
<div style="left:425px;top:421px;width:6px;height:1px;background:#000;"></div>
<div style="left:676px;top:667px;width:1px;height:6px;background:#000;"></div>
<div class="t" style="left:321px;top:412px;width:100px;height:20px;line-height:20px;font-size:13px;text-align:right">0.5</div>
<div class="t" style="left:526.5px;top:675px;width:300px;height:20px;line-height:20px;font-size:13px;color:#000;text-align:center;">0.5</div>
<div style="left:425px;top:371px;width:6px;height:1px;background:#000;"></div>
<div style="left:726px;top:667px;width:1px;height:6px;background:#000;"></div>
<div class="t" style="left:321px;top:362px;width:100px;height:20px;line-height:20px;font-size:13px;text-align:right">0.6</div>
<div class="t" style="left:576.5px;top:675px;width:300px;height:20px;line-height:20px;font-size:13px;color:#000;text-align:center;">0.6</div>
<div style="left:425px;top:321px;width:6px;height:1px;background:#000;"></div>
<div style="left:776px;top:667px;width:1px;height:6px;background:#000;"></div>
<div class="t" style="left:321px;top:312px;width:100px;height:20px;line-height:20px;font-size:13px;text-align:right">0.7</div>
<div class="t" style="left:626.5px;top:675px;width:300px;height:20px;line-height:20px;font-size:13px;color:#000;text-align:center;">0.7</div>
<div style="left:425px;top:271px;width:6px;height:1px;background:#000;"></div>
<div style="left:826px;top:667px;width:1px;height:6px;background:#000;"></div>
<div class="t" style="left:321px;top:262px;width:100px;height:20px;line-height:20px;font-size:13px;text-align:right">0.8</div>
<div class="t" style="left:676.5px;top:675px;width:300px;height:20px;line-height:20px;font-size:13px;color:#000;text-align:center;">0.8</div>
<div style="left:425px;top:221px;width:6px;height:1px;background:#000;"></div>
<div style="left:876px;top:667px;width:1px;height:6px;background:#000;"></div>
<div class="t" style="left:321px;top:212px;width:100px;height:20px;line-height:20px;font-size:13px;text-align:right">0.9</div>
<div class="t" style="left:726.5px;top:675px;width:300px;height:20px;line-height:20px;font-size:13px;color:#000;text-align:center;">0.9</div>
<div style="left:425px;top:170px;width:6px;height:1px;background:#000;"></div>
<div style="left:927px;top:667px;width:1px;height:6px;background:#000;"></div>
<div class="t" style="left:321px;top:161px;width:100px;height:20px;line-height:20px;font-size:13px;text-align:right">1</div>
<div class="t" style="left:777.5px;top:675px;width:300px;height:20px;line-height:20px;font-size:13px;color:#000;text-align:center;">1</div>
<div class="t" style="left:524.0px;top:146px;width:300px;height:20px;line-height:20px;font-size:13px;color:#000;text-align:center;">Model</div>
<div class="t" style="left:524.0px;top:692px;width:300px;height:20px;line-height:20px;font-size:13px;color:#000;text-align:center;"><span style="display:inline-block;transform:scaleX(1.07)">Step</span></div>
<div class="t" style="left:347px;top:412px;width:80px;height:20px;line-height:20px;font-size:13px;text-align:center;transform:rotate(-90deg);transform-origin:40px 10px">Something</div>
<svg style="left:0;top:0" width="988" height="120" viewBox="0 0 988 120"><g shape-rendering="crispEdges"><path d="M322 67h1v1h-1zM323 67h1v1h-1zM327 67h1v1h-1zM321 68h1v1h-1zM323 68h1v1h-1zM324 68h1v1h-1zM326 68h1v1h-1zM327 68h1v1h-1zM324 69h4v1h-4zM325 70h3v1h-3zM323 71h5v1h-5z" fill="#000"/><path d="M977 43h1v1h-1zM978 43h1v1h-1zM982 43h1v1h-1zM976 44h1v1h-1zM978 44h1v1h-1zM979 44h1v1h-1zM981 44h1v1h-1zM982 44h1v1h-1zM979 45h4v1h-4zM980 46h3v1h-3zM978 47h5v1h-5z" fill="#000"/></g></svg>
<svg style="left:0;top:0" width="988" height="120" viewBox="0 0 988 120"><defs><linearGradient id="pg" x1="0" y1="0" x2="1" y2="1"><stop offset="0" stop-color="#FFFFFF"/><stop offset="1" stop-color="#C8D8F8"/></linearGradient><linearGradient id="cb" x1="0" y1="0" x2="0" y2="1"><stop offset="0" stop-color="#9C9CF8"/><stop offset=".35" stop-color="#80F0F0"/><stop offset=".7" stop-color="#F8F080"/><stop offset="1" stop-color="#F8A890"/></linearGradient><linearGradient id="fl" x1="0" y1="0" x2="0" y2="1"><stop offset="0" stop-color="#FFF4B0"/><stop offset="1" stop-color="#F0C040"/></linearGradient><linearGradient id="skin" x1="0" y1="0" x2="0" y2="1"><stop offset="0" stop-color="#FFF0E0"/><stop offset="1" stop-color="#F0C898"/></linearGradient><linearGradient id="lens" x1="0" y1="0" x2="1" y2="1"><stop offset="0" stop-color="#FFFFFF"/><stop offset="1" stop-color="#B8E0F0"/></linearGradient></defs><path d="M360 61h1v15h-13v-1h12z" fill="#9098B8"/><path d="M347.5 60.5h8l4 4v10h-12z" fill="url(#pg)" stroke="#A8B8E8"/><path d="M359.5 64.5v10h-12" fill="none" stroke="#6870A8"/><path d="M355.5 60.5v4h4z" fill="#7080C0" stroke="#7080C0" stroke-linejoin="round"/><circle cx="348" cy="63" r="1.8" fill="#F0E888" stroke="#F08050" stroke-width="1"/><path d="M345 60h1v1h-1zM350 60h1v1h-1zM345 65h1v1h-1zM350 65h1v1h-1z" fill="#F09070"/><path d="M371 75h14v1h-14zM385 67h1v9h-1z" fill="#B8C0D0"/><path d="M370.5 74.5V65.5L372.5 63.5H376.5L377.5 65.5H383.5L384.5 66.5V74.5Z" fill="#F0C840" stroke="#C89818"/><path d="M371 65h5v2h-5zM377 66h6v1h-6z" fill="#FFFCE8"/><path d="M373.5 67.5H384.5L383.5 74.5H370.5Z" fill="url(#fl)" stroke="#C89818"/><path d="M374 68h9v1h-9z" fill="#FFFFF0"/><path d="M378 62.8Q380.5 60.2 383.2 62" fill="none" stroke="#3858A0" stroke-width="1.3"/><path d="M382 64.2L385.2 61V64.2Z" fill="#3858A0"/><defs><linearGradient id="fd" x1="0" y1="0" x2="1" y2="1"><stop offset="0" stop-color="#8080E0"/><stop offset="1" stop-color="#3838A8"/></linearGradient><linearGradient id="lbl" x1="0" y1="0" x2="1" y2="1"><stop offset="0" stop-color="#FFFFFF"/><stop offset=".6" stop-color="#F0F0FF"/><stop offset="1" stop-color="#B8B8E8"/></linearGradient><linearGradient id="pb" x1="0" y1="0" x2="0" y2="1"><stop offset="0" stop-color="#F0F0F0"/><stop offset=".5" stop-color="#D0D0D0"/><stop offset="1" stop-color="#F4F4F4"/></linearGradient></defs><path d="M397 75h14v1h-14zM410 62h1v14h-1z" fill="#A0A8B8"/><path d="M396.5 61.5h13v13h-13z" fill="url(#fd)" stroke="#3838A0"/><path d="M399 62h7v6h-7z" fill="url(#lbl)"/><path d="M398.5 61.5h8v7h-8z" fill="none" stroke="#4848B8" stroke-width=".8"/><path d="M400 70h6v4h-6z" fill="#E0E0F0"/><path d="M400 70h2.5v3h-2.5z" fill="#101018"/><path d="M407 62h1v1h-1z" fill="#202060"/><path d="M422.5 60.5h6l1.5 5h-7z" fill="#BCD8F8" stroke="#8CA8D8"/><path d="M421.5 68.5l2-3h8l2.5 3v5l-1.5 2h-10l-1-2z" fill="url(#pb)" stroke="#888888"/><path d="M422 71h11v1h-11z" fill="#A8A8A8"/><path d="M423 73h10v1h-10z" fill="#FFFFFF"/><path d="M433 66h1v9h-1z" fill="#707070" opacity=".6"/><path d="M432 70h1v1h-1z" fill="#40C040"/><path d="M444 59h1v21h-1z" fill="#808080"/><path d="M445 59h1v21h-1z" fill="#FFFFFF"/><path d="M477 59h1v21h-1z" fill="#808080"/><path d="M478 59h1v21h-1z" fill="#FFFFFF"/><path d="M648 59h1v21h-1z" fill="#808080"/><path d="M649 59h1v21h-1z" fill="#FFFFFF"/><path d="M681 59h1v21h-1z" fill="#808080"/><path d="M682 59h1v21h-1z" fill="#FFFFFF"/><path d="M739 59h1v21h-1z" fill="#808080"/><path d="M740 59h1v21h-1z" fill="#FFFFFF"/><path d="M458.5 62.5v12l3-3 2.5 5 2-1-2.5-5h4z" fill="#FFFFFF" stroke="#000" stroke-linejoin="miter"/><path d="M495 71l5 4.5" stroke="#A06010" stroke-width="3.2" stroke-linecap="round"/><path d="M495 71l5 4.5" stroke="#F0B050" stroke-width="1.8" stroke-linecap="round"/><circle cx="491.5" cy="66.5" r="4.7" fill="url(#lens)" stroke="#9098D8" stroke-width="1.2"/><path d="M489 66h5v1.4h-5z" fill="#203878"/><path d="M490.8 63.8h1.4v5h-1.4z" fill="#203878"/><path d="M520 71l5 4.5" stroke="#A06010" stroke-width="3.2" stroke-linecap="round"/><path d="M520 71l5 4.5" stroke="#F0B050" stroke-width="1.8" stroke-linecap="round"/><circle cx="516.5" cy="66.5" r="4.7" fill="url(#lens)" stroke="#9098D8" stroke-width="1.2"/><path d="M514 66h5v1.4h-5z" fill="#203878"/><path d="M541.5 76.5L536.5 70.5V68.5H538L539.5 70V63Q539.5 61.5 540.8 61.5Q542 61.5 542 63V62Q542 60.5 543.5 60.5Q545 60.5 545 62V63Q545 61.5 546.3 61.5Q547.5 61.5 547.5 63V65Q547.5 63.5 549.3 63.5Q551 63.5 551 65V71L548.5 76.5Z" fill="url(#skin)" stroke="#2850C8" stroke-width="1.1"/><path d="M542 63V67.5M545 62.5V67.5M547.5 64V67.5" stroke="#2850C8" stroke-width=".9"/><path d="M563.8 64.6A6.4 6.4 0 1 1 562.9 70.5" fill="none" stroke="#2C4C98" stroke-width="2.1"/><path d="M561.3 67L564.2 61.8 566.8 66.2Z" fill="#3858A8"/><path d="M566.5 66.5h5v5.5h-5z" fill="#C8D8F8" stroke="#2C4C98" stroke-width="1"/><path d="M567.5 68h3M569 68v3" stroke="#2C4C98" stroke-width="1"/><path d="M591.5 61.5h9v9h-9z" fill="#F0F0B0" stroke="#909050"/><path d="M593 63h6v1h-6zM593 65h6v1h-6zM593 67h6v1h-6z" fill="#A0A070"/><path d="M586 64h1v2h-1zM587 66h1v1h-1zM588 68h1v2h-1zM593 74h2v1h-2zM596 75h2v1h-2zM599 76h2v1h-2z" fill="#0000FF"/><path d="M586.5 71h8v2h-8zM589.5 68h2v8h-2z" fill="#000"/><path d="M626 62l-7 7" stroke="#3040A0" stroke-width="3.2" stroke-linecap="round"/><path d="M626 62l-7 7" stroke="#D0D8F8" stroke-width="1.4" stroke-linecap="round"/><path d="M618 68l2 2-3 4-5 2 1-4z" fill="#505050" stroke="#303030" stroke-width=".8"/><path d="M620.5 70.5h6v6h-6z" fill="#FFFFFF"/><path d="M621 71h5v5h-5z" fill="#F00000"/><path d="M636 67h5l-2.5 3z" fill="#000"/><path d="M659.5 61.5h10v8h-10z" fill="#FFFFFF" stroke="#2C48A0"/><path d="M659 61h11v2h-11z" fill="#2C48A0"/><path d="M657.5 64.5h10v8h-10z" fill="#E8ECF8" stroke="#2C48A0"/><path d="M657 64h11v2h-11z" fill="#2C48A0"/><ellipse cx="662" cy="73.5" rx="3.3" ry="2.3" fill="none" stroke="#304870" stroke-width="1.7"/><ellipse cx="668" cy="73.5" rx="3.3" ry="2.3" fill="none" stroke="#304870" stroke-width="1.7"/><ellipse cx="662" cy="73.5" rx="3.3" ry="2.3" fill="none" stroke="#A8C0E8" stroke-width=".6"/><ellipse cx="668" cy="73.5" rx="3.3" ry="2.3" fill="none" stroke="#A8C0E8" stroke-width=".6"/><path d="M703 62h1v14h-10v-1h9z" fill="#B8B8B8"/><path d="M693.5 61.5h9v14h-9z" fill="url(#cb)" stroke="#2C4080" stroke-width="1.2"/><path d="M730 62h1v14h-15v-1h14z" fill="#B8B8B8"/><path d="M715.5 61.5h14v14h-14z" fill="#FFFFFF" stroke="#304080" stroke-width="1.3"/><path d="M723 64h6v9h-6z" fill="#E4E8F4"/><path d="M717 64h5v4h-5z" fill="#E05858"/><path d="M717 70h5v4h-5z" fill="#5858E0"/><path d="M724 65h4v1.6h-4zM724 71h4v1.6h-4z" fill="#000"/><path d="M762 64h1v11h-11v-1h10z" fill="#B0B0B0"/><path d="M751.5 63.5h10v10h-10z" fill="#A4A4A4" stroke="#8C8C8C"/><path d="M752 64h9v2h-9z" fill="#8C8C8C"/><path d="M788 62h1v14h-15v-1h14z" fill="#B0B0B8"/><path d="M773 61h15v14h-15z" fill="#2C4890"/><path d="M774 62h13v1h-13z" fill="#5078D0"/><path d="M774 64h2v7h-2zM785 64h2v7h-2z" fill="#FFFFFF"/><path d="M777 64h7v7h-7z" fill="#FFFFFF"/><path d="M774 72h13v2h-13z" fill="#E8E4D8"/><path d="M775 65h1v1h-1zM774 67h1v1h-1zM775 69h1v1h-1zM785 65h1v1h-1zM786 67h1v1h-1zM785 69h1v1h-1zM775 73h1v1h-1zM777 73h1v1h-1zM779 73h1v1h-1zM781 73h1v1h-1zM783 73h1v1h-1zM785 73h1v1h-1z" fill="#B8B8B0"/><path d="M341 84h25v23h-25z" fill="#FFFFFF"/><path d="M341 84h24v22h-24z" fill="#808080"/><path d="M342 85h23v21h-23z" fill="#E8E6E2"/><path d="M574 84h25v23h-25z" fill="#FFFFFF"/><path d="M574 84h24v22h-24z" fill="#808080"/><path d="M575 85h23v21h-23z" fill="#E8E6E2"/><path d="M519 86h1v19h-1z" fill="#808080"/><path d="M520 86h1v19h-1z" fill="#FFFFFF"/><path d="M627 86h1v19h-1z" fill="#808080"/><path d="M628 86h1v19h-1z" fill="#FFFFFF"/><path d="M660 86h1v19h-1z" fill="#808080"/><path d="M661 86h1v19h-1z" fill="#FFFFFF"/><path d="M718 86h1v19h-1z" fill="#808080"/><path d="M719 86h1v19h-1z" fill="#FFFFFF"/><path d="M347 87h1v1h-1zM346 88h3v1h-3zM347 89h1v1h-1zM347 90h1v1h-1zM348 91h1v1h-1z" fill="#000"/><path d="M358 87h2v1h-2zM357 88h4v1h-4zM358 89h3v1h-3zM359 90h1v1h-1z" fill="#0000FF"/><path d="M349 92h1v1h-1z" fill="#000"/><path d="M349 93h1v1h-1zM351 93h1v1h-1z" fill="#000"/><path d="M350 93h1v1h-1z" fill="#FFFF00"/><path d="M348 94h1v1h-1zM352 94h1v1h-1z" fill="#000"/><path d="M349 94h3v1h-3z" fill="#FFFF00"/><path d="M349 95h1v1h-1zM353 95h1v1h-1z" fill="#000"/><path d="M350 95h3v1h-3z" fill="#FFFF00"/><path d="M350 96h1v1h-1zM354 96h1v1h-1z" fill="#000"/><path d="M351 96h3v1h-3z" fill="#FFFF00"/><path d="M351 97h1v1h-1zM355 97h1v1h-1z" fill="#000"/><path d="M352 97h3v1h-3z" fill="#FFFF00"/><path d="M352 98h1v1h-1zM354 98h1v1h-1z" fill="#000"/><path d="M353 98h1v1h-1z" fill="#FFFF00"/><path d="M350 92h1v1h-1zM353 99h1v1h-1z" fill="#000"/><path d="M353 92h1v1h-1zM354 93h1v1h-1zM355 94h1v1h-1z" fill="#000"/><path d="M356 100h1v1h-1zM357 101h4v1h-4zM359 100h1v1h-1zM359 102h1v1h-1zM360 101h1v1h-1z" fill="#000"/><path d="M372 87h1v1h-1zM371 88h3v1h-3zM372 89h1v1h-1zM372 90h1v1h-1zM373 91h1v1h-1z" fill="#000"/><path d="M382 88h2v1h-2zM381 89h4v1h-4zM382 90h3v1h-3zM383 91h1v1h-1z" fill="#0000FF"/><path d="M375 93h1v2h-1zM375 100h1v2h-1zM371 97h2v1h-2zM378 97h2v1h-2zM372 94h1v1h-1zM378 94h1v1h-1zM372 100h1v1h-1zM378 100h1v1h-1z" fill="#000"/><path d="M374 96h3v3h-3z" fill="#FFFF00"/><path d="M375 96h1v3h-1zM374 97h3v1h-3zM373 95h1v1h-1zM377 95h1v1h-1zM373 99h1v1h-1zM377 99h1v1h-1z" fill="#000"/><path d="M381 100h1v1h-1zM382 101h4v1h-4zM384 100h1v1h-1zM384 102h1v1h-1zM385 101h1v1h-1z" fill="#000"/><path d="M402 87h3v3h-3z" fill="#0000FF"/><path d="M401 91h5v1h-5zM399 92h2v1h-2zM406 92h1v1h-1zM397 93h2v2h-2zM407 92h2v2h-2z" fill="#000"/><path d="M402 95h1v1h-1zM401 96h1v1h-1zM400 97h1v1h-1z" fill="#000"/><path d="M404 96h1v1h-1zM406 96h1v1h-1z" fill="#000"/><path d="M405 96h1v1h-1z" fill="#FFFF00"/><path d="M403 97h1v1h-1zM407 97h1v1h-1z" fill="#000"/><path d="M404 97h3v1h-3z" fill="#FFFF00"/><path d="M402 98h1v1h-1zM406 98h1v1h-1z" fill="#000"/><path d="M403 98h3v1h-3z" fill="#FFFF00"/><path d="M401 99h1v1h-1zM405 99h1v1h-1z" fill="#000"/><path d="M402 99h3v1h-3z" fill="#FFFF00"/><path d="M400 100h1v1h-1zM404 100h1v1h-1z" fill="#000"/><path d="M401 100h3v1h-3z" fill="#FFFF00"/><path d="M401 101h1v1h-1zM403 101h1v1h-1z" fill="#000"/><path d="M402 101h1v1h-1z" fill="#FFFF00"/><path d="M405 95h1v1h-1zM402 102h1v1h-1z" fill="#000"/><path d="M427 87h3v3h-3z" fill="#0000FF"/><path d="M426 95h5v1h-5z" fill="#000"/><path d="M425 97h7v3h-7z" fill="#000"/><path d="M426 98h5v1h-5z" fill="#FFFF00"/><path d="M423 101h4v1h-4zM422 100h1v3h-1zM421 101h1v1h-1z" fill="#000"/><path d="M430 101h4v1h-4zM434 100h1v3h-1zM435 101h1v1h-1z" fill="#000"/><path d="M450 87h3v3h-3z" fill="#0000FF"/><path d="M449 95h5v1h-5z" fill="#000"/><path d="M448 97h7v3h-7z" fill="#000"/><path d="M449 98h5v1h-5z" fill="#FFFF00"/><path d="M457 92h1v4h-1zM456 92h1v1h-1zM458 92h1v1h-1zM457 91h1v1h-1z" fill="#000"/><path d="M457 98h1v4h-1zM456 101h1v1h-1zM458 101h1v1h-1zM457 102h1v1h-1z" fill="#000"/><path d="M477 87h3v3h-3z" fill="#0000FF"/><path d="M474 88h1v2h-1zM475 90h1v2h-1zM476 92h1v3h-1zM477 95h1v3h-1zM482 88h1v2h-1zM481 90h1v2h-1zM480 92h1v3h-1zM480 95h1v3h-1zM478 98h2v1h-2z" fill="#000"/><path d="M473 96h3v1h-3zM471 97h3v1h-3zM472 96h1v3h-1z" fill="#000"/><path d="M482 96h3v1h-3zM484 97h3v1h-3zM485 96h1v3h-1z" fill="#000"/><path d="M475 100h7v3h-7z" fill="#000"/><path d="M476 101h5v1h-5z" fill="#FFFF00"/><path d="M502 87h3v3h-3z" fill="#0000FF"/><path d="M503 91h1v1h-1zM503 95h1v2h-1zM502 98h4v1h-4z" fill="#000"/><path d="M498 93h10v1h-10zM497 94h1v2h-1zM508 94h1v1h-1zM509 95h1v2h-1zM508 97h1v1h-1zM506 96h2v2h-2z" fill="#000"/><path d="M500 100h7v3h-7z" fill="#000"/><path d="M501 101h5v1h-5z" fill="#FFFF00"/><path d="M534 87h1v1h-1zM538 87h1v1h-1zM535 88h1v1h-1zM537 88h1v1h-1zM536 89h1v1h-1zM535 90h1v1h-1zM537 90h1v1h-1zM534 91h1v1h-1zM538 91h1v1h-1z" fill="#000"/><path d="M532 92h2v8h-2zM531 94h4v1h-4z" fill="#FF0000"/><path d="M534 99l5.5-4" stroke="#0000FF" stroke-width="2"/><path d="M533.5 99.8l5.5 3" stroke="#000" stroke-width="2"/><path d="M558 87h1v2h-1zM562 87h1v2h-1zM559 89h1v1h-1zM561 89h1v1h-1zM560 90h1v3h-1zM559 90h1v1h-1zM561 90h1v1h-1z" fill="#000"/><path d="M557 92h2v8h-2zM556 94h4v1h-4z" fill="#000"/><path d="M559 99l5.5-4" stroke="#FF0000" stroke-width="2"/><path d="M558.5 99.8l5.5 3" stroke="#0000FF" stroke-width="2"/><path d="M584 87h6v1h-6zM588 88h1v1h-1zM587 89h1v1h-1zM586 90h1v1h-1zM584 91h6v1h-6zM585 90h1v1h-1z" fill="#000"/><path d="M582 92h2v8h-2zM581 94h4v1h-4z" fill="#0000FF"/><path d="M584 99l5.5-4" stroke="#000" stroke-width="2"/><path d="M583.5 99.8l5.5 3" stroke="#FF0000" stroke-width="2"/><path d="M606.5 90.2l3.6 6.6" stroke="#FF0000" stroke-width="1.9"/><path d="M614 91l-3.8 5.6" stroke="#0000FF" stroke-width="1.9"/><path d="M610 97.2l5.6 4" stroke="#000" stroke-width="1.9"/><path d="M643 87h3v1h-3zM641 88h7v2h-7zM640 90h9v2h-9zM641 92h7v2h-7zM643 94h3v1h-3z" fill="#FFFF00"/><path d="M643 86h3v1h-3zM641 87h2v1h-2zM646 87h2v1h-2zM640 88h1v2h-1zM648 88h1v2h-1zM639 90h1v2h-1zM649 90h1v2h-1zM640 92h1v2h-1zM648 92h1v2h-1zM641 94h2v1h-2zM646 94h2v1h-2zM643 90h1v1h-1zM645 90h1v1h-1zM642 91h1v1h-1zM644 91h1v1h-1zM646 91h1v1h-1zM642 95h5v1h-5zM642 96h1v1h-1zM646 96h1v1h-1zM642 97h5v1h-5zM642 98h1v1h-1zM646 98h1v1h-1zM642 99h5v1h-5zM643 100h3v2h-3z" fill="#000"/><path d="M643 96h3v1h-3zM643 98h3v1h-3zM644 100h1v1h-1z" fill="#FFFFFF"/><path d="M675 86h10v1h-10zM684 87h1v9h-1zM674 87h1v1h-1zM673 88h1v1h-1zM672 89h1v1h-1zM683 88h1v1h-1zM682 89h1v1h-1zM681 90h1v1h-1zM683 96h1v1h-1zM682 97h1v1h-1zM681 98h1v1h-1z" fill="#000"/><path d="M675 88h1v1h-1zM675 90h1v1h-1zM675 92h1v1h-1zM676 95h1v1h-1zM678 95h1v1h-1zM680 95h1v1h-1zM682 95h1v1h-1zM674 94h1v1h-1zM673 96h1v1h-1zM672 98h1v1h-1z" fill="#000"/><path d="M671.5 90.5h9v9.5h-9z" fill="none" stroke="#0000FF" stroke-width="1.3"/><path d="M706 89h1v1h-1zM707 90h1v8h-1zM706 98h1v1h-1z" fill="#000"/><path d="M697 89h1v1h-1zM699 90h1v1h-1zM701 90h1v1h-1zM703 90h1v1h-1zM700 92h1v1h-1zM700 94h1v1h-1zM700 96h1v1h-1zM699 97h1v1h-1zM701 98h1v1h-1zM703 98h1v1h-1zM697 98h1v1h-1z" fill="#000"/><path d="M695.5 88.5h10v10.5h-10z" fill="none" stroke="#0000FF" stroke-width="1.3"/><path d="M731 87h3v3h-3z" fill="#0000FF"/><path d="M728 88h1v2h-1zM729 90h1v2h-1zM730 92h1v2h-1zM731 94h1v2h-1zM736 88h1v2h-1zM735 90h1v2h-1zM734 92h1v2h-1zM733 94h1v2h-1zM731 96h3v1h-3z" fill="#000"/><path d="M729 99h8v3h-8z" fill="#000"/><path d="M730 100h6v1h-6z" fill="#FFFF00"/><path d="M739 95h1v1h-1zM739 100h1v1h-1zM736 97h1v1h-1zM742 97h1v1h-1zM737 95h1v1h-1zM741 95h1v1h-1zM737 99h1v1h-1zM741 99h1v1h-1z" fill="#000"/><path d="M738 96h3v3h-3z" fill="#FFFF00"/><path d="M739 97h1v1h-1z" fill="#000"/><path d="M757.5 86.5h6l4 4v7l-4 4h-6l-4-4v-7z" fill="#F00000" stroke="#000" stroke-width="1.2"/><path d="M755 91h1v1h-1zM756 91h1v1h-1zM757 91h1v1h-1zM758 91h1v1h-1zM759 91h1v1h-1zM760 91h1v1h-1zM761 91h1v1h-1zM762 91h1v1h-1zM763 91h1v1h-1zM764 91h1v1h-1zM765 91h1v1h-1zM755 92h1v1h-1zM759 92h1v1h-1zM761 92h1v1h-1zM763 92h1v1h-1zM765 92h1v1h-1zM755 93h1v1h-1zM756 93h1v1h-1zM757 93h1v1h-1zM759 93h1v1h-1zM761 93h1v1h-1zM763 93h1v1h-1zM764 93h1v1h-1zM765 93h1v1h-1zM757 94h1v1h-1zM759 94h1v1h-1zM761 94h1v1h-1zM763 94h1v1h-1zM755 95h1v1h-1zM756 95h1v1h-1zM757 95h1v1h-1zM759 95h1v1h-1zM761 95h1v1h-1zM762 95h1v1h-1zM763 95h1v1h-1z" fill="#FFFFFF" shape-rendering="crispEdges"/></svg>
</body></html>
